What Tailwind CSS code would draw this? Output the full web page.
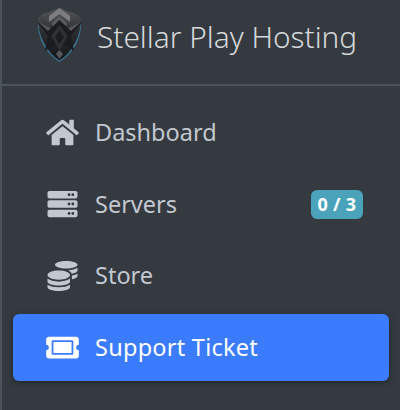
<!DOCTYPE html>
<html lang="en">
<head>
    <meta charset="UTF-8">
    <title>Stellar Play Hosting</title>
    <script src="https://cdn.jsdelivr.net/npm/@tailwindcss/browser@4"></script>
</head>
<body class="w-[400px] h-[410px] overflow-hidden bg-[#343a40] font-['Noto_Sans',sans-serif]">
    <aside class="h-full border-l-2 border-[#4b545c]">
        <!-- brand -->
        <div class="h-[86px] pl-[34px] flex items-center gap-[14px] border-b-2 border-[#4b545c]">
            <svg class="w-[47px] h-[56px] shrink-0 -mt-[15px] blur-[0.5px]" viewBox="0 0 47 56">
                <defs>
                    <linearGradient id="steel" x1="0" y1="0" x2="0" y2="1">
                        <stop offset="0" stop-color="#55575a"/>
                        <stop offset="0.45" stop-color="#2c2e31"/>
                        <stop offset="1" stop-color="#131518"/>
                    </linearGradient>
                </defs>
                <path d="M23.500 6L45 14C46 30 38 46 23.500 55C9 46 1 30 2 14Z" fill="#3a7691"/>
                <path d="M23.500 1L34 5C39 6 43 8 45 12C45 28 37 45 23.500 53.500C10 45 2 28 2 12C4 8 8 6 13 5Z" fill="url(#steel)"/>
                <path d="M23.500 1L34 9L34 15L23.500 7L13 15L13 9Z" fill="#7b7d7f"/>
                <path d="M23.500 9L31 16L30 20L23.500 14L17 20L16 16Z" fill="#5b5d60"/>
                <path d="M1 15L15 21L23.500 13L32 21L46 15L35 29L38 44L23.500 35L9 44L12 29Z" fill="#1a1c1f"/>
                <path d="M23.500 18L32 29L23.500 43L15 29Z" fill="#2e3134"/>
                <path d="M23.500 24L28 30L23.500 37L19 30Z" fill="#191b1e"/>
                <path d="M2 15L15 21L12 24ZM45 15L32 21L35 24ZM23.500 43L27 47L23.500 52L20 47Z" fill="#55575a"/>
            </svg>
            <span class="text-[29.800px] font-light text-[#d5d8da] leading-none whitespace-nowrap -mt-[10px]">Stellar Play Hosting</span>
        </div>
        <!-- nav -->
        <nav class="mt-[13px] px-[11px] flex flex-col gap-[4.670px] text-[23.500px] text-[#c2c7d0]">
            <a class="h-[67px] pl-[33px] pr-[26px] rounded-md flex items-center">
                <svg class="w-[33px] h-[29px] shrink-0 mr-[16px]" viewBox="0 0 576 512" fill="currentColor"><path d="M280.37 148.26L96 300.11V464a16 16 0 0 0 16 16l112.06-.29a16 16 0 0 0 15.92-16V368a16 16 0 0 1 16-16h64a16 16 0 0 1 16 16v95.64a16 16 0 0 0 16 16.05L464 480a16 16 0 0 0 16-16V300L295.67 148.26a12.19 12.19 0 0 0-15.3 0zM571.6 251.47L488 182.56V44.05a12 12 0 0 0-12-12h-56a12 12 0 0 0-12 12v72.61L318.47 43a48 48 0 0 0-61 0L4.34 251.47a12 12 0 0 0-1.6 16.9l25.5 31A12 12 0 0 0 45.15 301l235.22-193.74a12.19 12.19 0 0 1 15.3 0L530.9 301a12 12 0 0 0 16.9-1.6l25.5-31a12 12 0 0 0-1.7-16.93z"/></svg>
                <span>Dashboard</span>
            </a>
            <a class="h-[67px] pl-[33px] pr-[26px] rounded-md flex items-center">
                <svg class="w-[33px] h-[30px] shrink-0 mr-[16px]" viewBox="0 0 512 512" fill="currentColor"><path d="M480 160H32c-17.673 0-32-14.327-32-32V64c0-17.673 14.327-32 32-32h448c17.673 0 32 14.327 32 32v64c0 17.673-14.327 32-32 32zm-48-88c-13.255 0-24 10.745-24 24s10.745 24 24 24 24-10.745 24-24-10.745-24-24-24zm-64 0c-13.255 0-24 10.745-24 24s10.745 24 24 24 24-10.745 24-24-10.745-24-24-24zm112 248H32c-17.673 0-32-14.327-32-32v-64c0-17.673 14.327-32 32-32h448c17.673 0 32 14.327 32 32v64c0 17.673-14.327 32-32 32zm-48-88c-13.255 0-24 10.745-24 24s10.745 24 24 24 24-10.745 24-24-10.745-24-24-24zm-64 0c-13.255 0-24 10.745-24 24s10.745 24 24 24 24-10.745 24-24-10.745-24-24-24zm112 248H32c-17.673 0-32-14.327-32-32v-64c0-17.673 14.327-32 32-32h448c17.673 0 32 14.327 32 32v64c0 17.673-14.327 32-32 32zm-48-88c-13.255 0-24 10.745-24 24s10.745 24 24 24 24-10.745 24-24-10.745-24-24-24zm-64 0c-13.255 0-24 10.745-24 24s10.745 24 24 24 24-10.745 24-24-10.745-24-24-24z"/></svg>
                <span>Servers</span>
                <span class="ml-auto w-[52px] h-[29px] rounded-md bg-[#4aa3ba] text-white text-[18px] font-bold flex items-center justify-center tracking-[0.3px]">0 / 3</span>
            </a>
            <a class="h-[67px] pl-[33px] pr-[26px] rounded-md flex items-center">
                <svg class="w-[33px] h-[30px] shrink-0 mr-[16px]" viewBox="0 0 512 512" fill="currentColor"><path d="M0 405.3V448c0 35.3 86 64 192 64s192-28.7 192-64v-42.7C342.7 434.4 267.2 448 192 448S41.3 434.4 0 405.3zM320 128c106 0 192-28.7 192-64S426 0 320 0 128 28.7 128 64s86 64 192 64zM0 300.4V352c0 35.3 86 64 192 64s192-28.7 192-64v-51.6c-41.3 34-116.9 51.6-192 51.6S41.3 334.4 0 300.4zm416 11c57.3-11.1 96-31.7 96-55.4v-42.7c-23.2 16.4-57.3 27.6-96 34.5v63.6zM192 160C86 160 0 195.8 0 240s86 80 192 80 192-35.8 192-80-86-80-192-80zm219.3 56.3c60-10.8 100.7-32 100.7-56.3v-42.7c-35.5 25.1-96.5 38.6-160.7 41.8 29.5 14.3 51.2 33.5 60 57.2z"/></svg>
                <span>Store</span>
            </a>
            <a class="h-[67px] pl-[33px] pr-[26px] rounded-md flex items-center bg-[#3b7bfd] text-white shadow-[0_2px_6px_rgba(0,0,0,0.35)]">
                <svg class="w-[33px] h-[29px] shrink-0 mr-[16px]" viewBox="0 0 576 512" fill="currentColor"><path d="M128 160h320v192H128V160zm400 96c0 26.51 21.49 48 48 48v96c0 26.51-21.49 48-48 48H48c-26.51 0-48-21.49-48-48v-96c26.51 0 48-21.49 48-48s-21.49-48-48-48v-96c0-26.51 21.49-48 48-48h480c26.51 0 48 21.49 48 48v96c-26.51 0-48 21.49-48 48zm-48-104c0-13.255-10.745-24-24-24H120c-13.255 0-24 10.745-24 24v208c0 13.255 10.745 24 24 24h336c13.255 0 24-10.745 24-24V152z"/></svg>
                <span class="tracking-[0.25px]">Support Ticket</span>
            </a>
        </nav>
    </aside>
</body>
</html>
